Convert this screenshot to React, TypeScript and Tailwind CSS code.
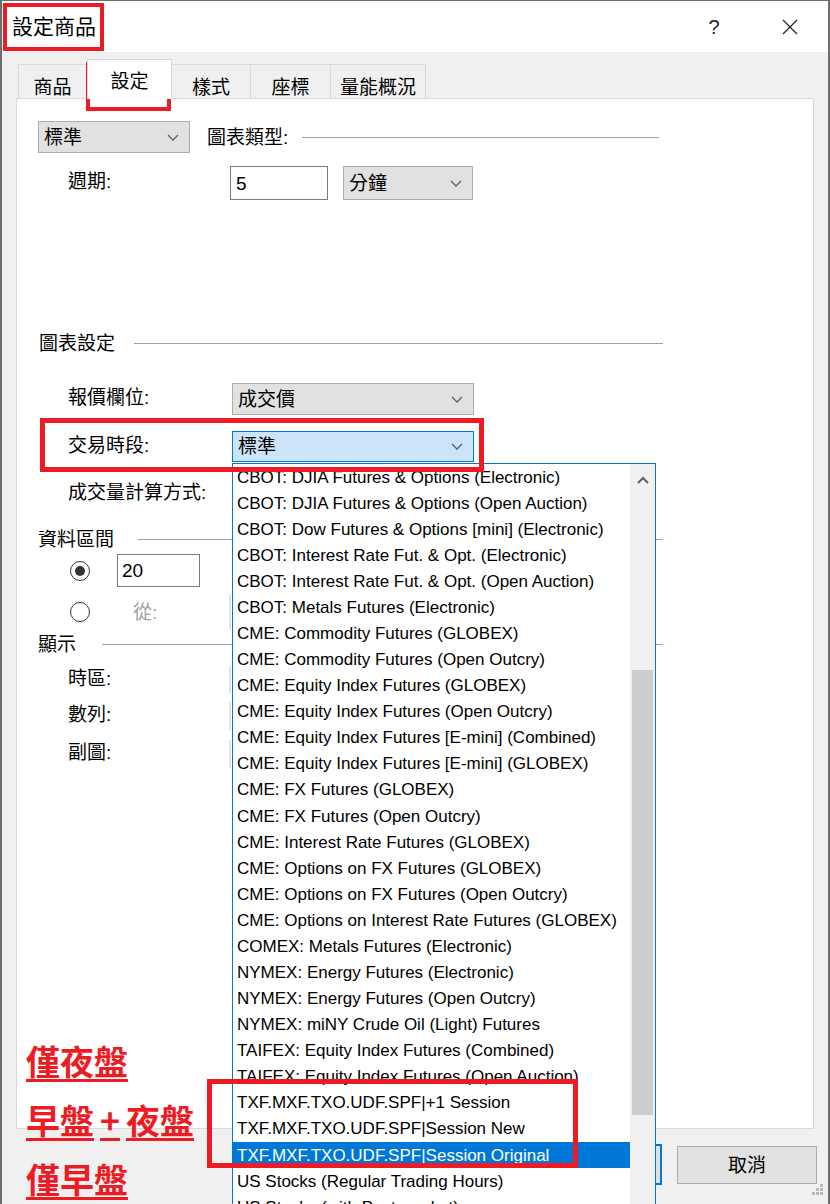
const sessions = [
  "CBOT: DJIA Futures & Options (Electronic)",
  "CBOT: DJIA Futures & Options (Open Auction)",
  "CBOT: Dow Futures & Options [mini] (Electronic)",
  "CBOT: Interest Rate Fut. & Opt. (Electronic)",
  "CBOT: Interest Rate Fut. & Opt. (Open Auction)",
  "CBOT: Metals Futures (Electronic)",
  "CME: Commodity Futures (GLOBEX)",
  "CME: Commodity Futures (Open Outcry)",
  "CME: Equity Index Futures (GLOBEX)",
  "CME: Equity Index Futures (Open Outcry)",
  "CME: Equity Index Futures [E-mini] (Combined)",
  "CME: Equity Index Futures [E-mini] (GLOBEX)",
  "CME: FX Futures (GLOBEX)",
  "CME: FX Futures (Open Outcry)",
  "CME: Interest Rate Futures (GLOBEX)",
  "CME: Options on FX Futures (GLOBEX)",
  "CME: Options on FX Futures (Open Outcry)",
  "CME: Options on Interest Rate Futures (GLOBEX)",
  "COMEX: Metals Futures (Electronic)",
  "NYMEX: Energy Futures (Electronic)",
  "NYMEX: Energy Futures (Open Outcry)",
  "NYMEX: miNY Crude Oil (Light) Futures",
  "TAIFEX: Equity Index Futures (Combined)",
  "TAIFEX: Equity Index Futures (Open Auction)",
  "TXF.MXF.TXO.UDF.SPF|+1 Session",
  "TXF.MXF.TXO.UDF.SPF|Session New",
  "TXF.MXF.TXO.UDF.SPF|Session Original",
  "US Stocks (Regular Trading Hours)",
  "US Stocks (with Post-market)",
];

const SELECTED = "TXF.MXF.TXO.UDF.SPF|Session Original";

function Chevron() {
  return (
    <svg width="12" height="7" viewBox="0 0 12 7">
      <path d="M1 1l5 5 5-5" fill="none" stroke="#5f5f5f" strokeWidth="1.3" />
    </svg>
  );
}

function Combo({ className, value, focused }: { className: string; value?: string; focused?: boolean }) {
  return (
    <div
      className={`flex items-center justify-between pl-[5px] pr-[10px] ${
        focused ? "border border-[#0078d7] bg-[#cce4f7]" : "border border-[#adadad] bg-[#e1e1e1]"
      } ${className}`}
    >
      <span className="text-[19px] leading-none text-black">{value}</span>
      <Chevron />
    </div>
  );
}

// controls that sit under the open list; only their left edge peeks out
function Hidden({ className }: { className: string }) {
  return <div className={`border-l-2 border-[#e4e4e4] bg-white ${className}`} />;
}

function Label({ text, className = "" }: { text: string; className?: string }) {
  return <span className={`shrink-0 text-[19px] leading-none text-black ${className}`}>{text}</span>;
}

function GroupLine({ title, gap }: { title: string; gap: string }) {
  return (
    <div className="flex h-[20px] items-center">
      <Label text={title} />
      <div className={`h-px flex-1 bg-[#a0a0a0] ${gap}`} />
    </div>
  );
}

function Radio({ checked }: { checked?: boolean }) {
  return (
    <div className="ml-[32px] flex h-[20px] w-[20px] shrink-0 items-center justify-center rounded-full border border-[#333]">
      {checked && <div className="h-[10px] w-[10px] rounded-full bg-[#333]" />}
    </div>
  );
}

function Tab({ text, width, active }: { text: string; width: string; active?: boolean }) {
  if (active) {
    return (
      <div
        className={`relative z-10 -mb-px flex h-[40px] items-start justify-center border border-b-0 border-[#d9d9d9] bg-white pt-[12px] ${width}`}
      >
        <Label text={text} />
      </div>
    );
  }
  return (
    <div
      className={`flex h-[34px] items-start justify-center border border-b-0 border-l-0 border-[#d9d9d9] bg-[#f0f0f0] pt-[13px] first:border-l ${width}`}
    >
      <Label text={text} />
    </div>
  );
}

export default function App() {
  return (
    <div className="relative h-[1204px] w-[830px] overflow-hidden font-['Liberation_Sans','Noto_Sans_CJK_TC',sans-serif]">
      <div className="flex h-[1204px] w-[830px] flex-col border-l-2 border-r-2 border-t border-[#6e6e6e] bg-[#f0f0f0]">
        {/* title bar */}
        <div className="flex h-[51px] items-center bg-white pl-[10px] pr-[28px]">
          <span className="text-[21px] leading-none text-black">設定商品</span>
          <span className="ml-auto w-[20px] text-center text-[20px] font-light leading-none text-[#222]">?</span>
          <div className="ml-[56px] flex w-[20px] justify-center">
            <svg width="16" height="16" viewBox="0 0 16 16">
              <path d="M1 1l14 14M15 1L1 15" stroke="#222" strokeWidth="1.2" />
            </svg>
          </div>
        </div>

        {/* tabs */}
        <div className="flex h-[46px] items-end pl-[16px]">
          <Tab text="商品" width="w-[69px]" />
          <Tab text="設定" width="w-[85px]" active />
          <Tab text="樣式" width="w-[79px]" />
          <Tab text="座標" width="w-[80px]" />
          <Tab text="量能概況" width="w-[95px]" />
        </div>

        {/* tab page */}
        <div className="ml-[14px] flex h-[1031px] w-[798px] flex-col border border-[#d9d9d9] bg-white pl-[21px] pr-[150px]">
          <div className="mt-[22px] flex h-[32px] items-center">
            <Combo className="h-[32px] w-[152px]" value="標準" />
            <Label text="圖表類型:" className="ml-[17px]" />
            <div className="ml-[14px] mr-[4px] h-px flex-1 bg-[#a0a0a0]" />
          </div>
          <div className="mt-[13px] flex h-[34px] items-center">
            <div className="w-[192px] pl-[30px]">
              <Label text="週期:" />
            </div>
            <div className="flex h-[34px] w-[98px] items-center border border-[#7a7a7a] bg-white pl-[5px] text-[19px] leading-none">
              5
            </div>
            <Combo className="ml-[15px] h-[34px] w-[130px]" value="分鐘" />
          </div>

          <div className="mt-[133px] pl-px">
            <GroupLine title="圖表設定" gap="ml-[19px]" />
          </div>
          <div className="mt-[30px] flex h-[32px] items-center">
            <div className="w-[194px] pl-[30px]">
              <Label text="報價欄位:" />
            </div>
            <Combo className="h-[32px] w-[242px]" value="成交價" />
          </div>
          <div className="mt-[16px] flex h-[31px] items-center">
            <div className="w-[194px] pl-[30px]">
              <Label text="交易時段:" />
            </div>
            <Combo className="h-[31px] w-[242px]" value="標準" focused />
          </div>
          <div className="mt-[16px] flex h-[32px] items-center">
            <div className="w-[194px] pl-[30px]">
              <Label text="成交量計算方式:" />
            </div>
            <Hidden className="h-[32px] w-[242px]" />
          </div>

          <div className="mt-[19px]">
            <GroupLine title="資料區間" gap="ml-[24px]" />
          </div>
          <div className="mt-[5px] flex h-[33px] items-center">
            <Radio checked />
            <div className="ml-[27px] flex h-[33px] w-[83px] items-center border border-[#7a7a7a] bg-white pl-[4px] text-[19px] leading-none">
              20
            </div>
          </div>
          <div className="mt-[7px] flex h-[36px] items-center">
            <Radio />
            <span className="ml-[43px] w-[96px] text-[19px] leading-none text-[#a0a0a0]">從:</span>
            <Hidden className="h-[36px] w-[300px]" />
          </div>

          <div className="mt-[4px]">
            <GroupLine title="顯示" gap="ml-[26px]" />
          </div>
          <div className="mt-[10px] flex h-[32px] items-center">
            <div className="w-[191px] pl-[30px]">
              <Label text="時區:" />
            </div>
            <Hidden className="h-[28px] w-[242px]" />
          </div>
          <div className="mt-[4px] flex h-[32px] items-center">
            <div className="w-[191px] pl-[30px]">
              <Label text="數列:" />
            </div>
            <Hidden className="h-[28px] w-[242px]" />
          </div>
          <div className="mt-[6px] flex h-[32px] items-center">
            <div className="w-[191px] pl-[30px]">
              <Label text="副圖:" />
            </div>
            <Hidden className="h-[28px] w-[242px]" />
          </div>
        </div>

        {/* dialog buttons */}
        <div className="mt-[15px] flex items-start justify-end gap-[15px] pr-[11px]">
          <button className="flex h-[41px] w-[126px] items-center justify-center border-2 border-[#0078d7] bg-[#e1e1e1] text-[19px] leading-none">
            確定
          </button>
          <button className="mt-[2px] flex h-[38px] w-[140px] items-center justify-center border border-[#adadad] bg-[#e1e1e1] text-[19px] leading-none text-black">
            取消
          </button>
        </div>
      </div>

      {/* size grip */}
      <div className="absolute left-[812px] top-[1184px] grid grid-cols-3 gap-[1px]">
        {[0, 0, 1, 0, 1, 1, 1, 1, 1].map((on, i) => (
          <div key={i} className={`h-[3px] w-[3px] ${on ? "bg-[#b8b8b8]" : ""}`} />
        ))}
      </div>

      {/* open drop-down of 交易時段 */}
      <div className="absolute left-[232px] top-[463px] flex h-[760px] w-[424px] border border-[#0078d7] bg-white">
        <div className="flex-1">
          {sessions.map((s) => (
            <div
              key={s}
              className={`flex h-[26.08px] items-center whitespace-nowrap pl-[4px] text-[17px] leading-none ${
                s === SELECTED ? "bg-[#0078d7] text-white" : "text-black"
              }`}
            >
              {s}
            </div>
          ))}
        </div>
        <div className="flex w-[25px] flex-col items-center bg-[#f0f0f0]">
          <svg width="12" height="8" viewBox="0 0 12 8" className="mt-[12px]">
            <path d="M1 7l5-5 5 5" fill="none" stroke="#606060" strokeWidth="2" />
          </svg>
          <div className="mt-[186px] h-[445px] w-[21px] bg-[#cdcdcd]" />
        </div>
      </div>

      {/* red markers */}
      <div className="absolute left-[3px] top-[3px] h-[48px] w-[101px] border-4 border-[#ed1c24]" />
      <div className="absolute left-[86px] top-[62px] h-[49px] w-[85px] border-4 border-[#ed1c24]" />
      <div className="absolute left-[40px] top-[418px] h-[54px] w-[444px] border-[5px] border-[#ed1c24]" />
      <div className="absolute left-[207px] top-[1079px] h-[89px] w-[371px] border-[5px] border-[#ed1c24]" />

      <div className="absolute left-[26px] top-[1044px] flex flex-col gap-[25px] font-['Noto_Sans_CJK_TC',sans-serif] text-[34px] font-bold leading-none text-[#ed1c24]">
        <span className="underline decoration-[3px] underline-offset-[4px]">僅夜盤</span>
        <span className="underline decoration-[3px] underline-offset-[4px]">
          早盤<span className="mx-[6px]">+</span>夜盤
        </span>
        <span className="underline decoration-[3px] underline-offset-[4px]">僅早盤</span>
      </div>
    </div>
  );
}
